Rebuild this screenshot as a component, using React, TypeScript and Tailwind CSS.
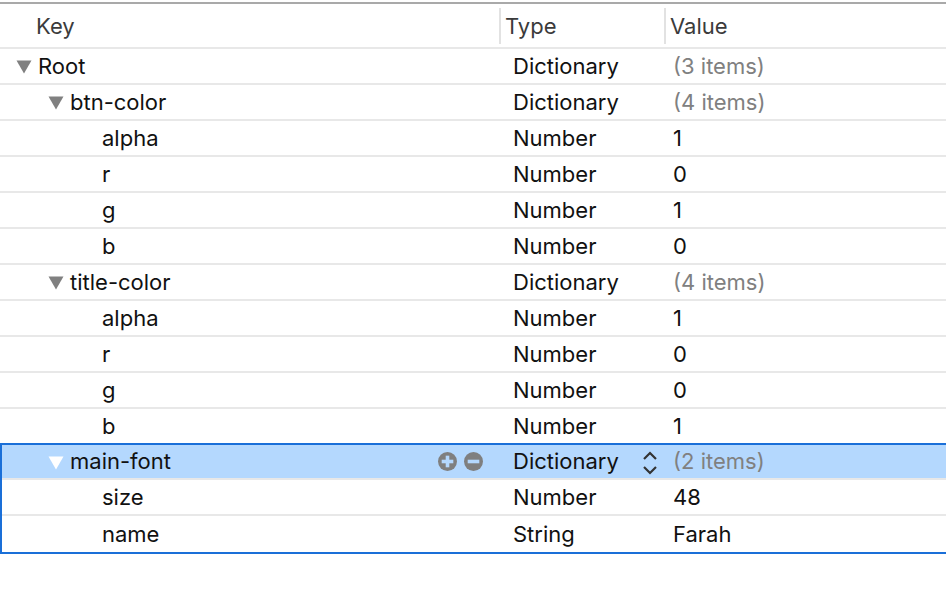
import React from "react";

type Row = {
  key: string;
  type: string;
  value: string;
  level: number;
  open?: boolean;
  muted?: boolean;
};

const rows: Row[] = [
  { key: "Root", type: "Dictionary", value: "(3 items)", level: 0, open: true, muted: true },
  { key: "btn-color", type: "Dictionary", value: "(4 items)", level: 1, open: true, muted: true },
  { key: "alpha", type: "Number", value: "1", level: 2 },
  { key: "r", type: "Number", value: "0", level: 2 },
  { key: "g", type: "Number", value: "1", level: 2 },
  { key: "b", type: "Number", value: "0", level: 2 },
  { key: "title-color", type: "Dictionary", value: "(4 items)", level: 1, open: true, muted: true },
  { key: "alpha", type: "Number", value: "1", level: 2 },
  { key: "r", type: "Number", value: "0", level: 2 },
  { key: "g", type: "Number", value: "0", level: 2 },
  { key: "b", type: "Number", value: "1", level: 2 },
];

const selected: Row[] = [
  { key: "main-font", type: "Dictionary", value: "(2 items)", level: 1, open: true, muted: true },
  { key: "size", type: "Number", value: "48", level: 2 },
  { key: "name", type: "String", value: "Farah", level: 2 },
];

// padding-left of the key cell, per level (outside / inside the selection box)
const indent = ["pl-[16px]", "pl-[48px]", "pl-[102px]"];
const boxIndent = ["pl-[14px]", "pl-[46px]", "pl-[100px]"];

function Triangle({ white }: { white?: boolean }) {
  return (
    <svg width="16" height="14" viewBox="0 0 16 14" className="mr-[6px] mt-[2px] shrink-0">
      <polygon points="0.5,0.5 15.5,0.5 8,13.5" fill={white ? "#ffffff" : "#808080"} />
    </svg>
  );
}

function PlusMinus() {
  return (
    <div className="ml-auto mr-[16px] flex items-center gap-[7px]">
      <svg width="19" height="19" viewBox="0 0 18 18">
        <circle cx="9" cy="9" r="9" fill="#7f7f7f" />
        <rect x="3.5" y="7.3" width="11" height="3.4" fill="#b4d8fe" />
        <rect x="7.3" y="3.5" width="3.4" height="11" fill="#b4d8fe" />
      </svg>
      <svg width="19" height="19" viewBox="0 0 18 18">
        <circle cx="9" cy="9" r="9" fill="#7f7f7f" />
        <rect x="3.5" y="7.3" width="11" height="3.4" fill="#b4d8fe" />
      </svg>
    </div>
  );
}

function Chevrons() {
  return (
    <svg width="16" height="28" viewBox="0 0 16 28" className="ml-auto mr-[6px] mt-[2px]">
      <polyline points="2,10 8,4 14,10" fill="none" stroke="#333" strokeWidth="2.2" />
      <polyline points="2,18 8,24 14,18" fill="none" stroke="#333" strokeWidth="2.2" />
    </svg>
  );
}

function TableRow({
  row,
  active,
  last,
  inBox,
}: {
  row: Row;
  active?: boolean;
  last?: boolean;
  inBox?: boolean;
}) {
  const hasKids = row.open !== undefined;
  const pad = inBox ? boxIndent[row.level] : indent[row.level];
  return (
    <div
      className={`flex items-center ${active ? "h-[35px] bg-[#b4d8fe]" : "h-[36px]"} ${
        last ? "" : "border-b-2 border-[#e8e8e8]"
      }`}
    >
      <div className={`flex h-full items-center ${inBox ? "w-[497px]" : "w-[499px]"} ${pad}`}>
        {hasKids && <Triangle white={active} />}
        <span>{row.key}</span>
        {active && <PlusMinus />}
      </div>
      <div className="flex h-full w-[165px] items-center pl-[14px]">
        <span>{row.type}</span>
        {active && <Chevrons />}
      </div>
      <div className={`flex-1 pl-[9px] ${row.muted ? "text-[#808080]" : ""}`}>{row.value}</div>
    </div>
  );
}

export default function App() {
  return (
    <div
      className="h-[608px] w-[946px] overflow-hidden bg-white text-[22px] text-[#111111]"
      style={{ fontFamily: "Inter, 'Liberation Sans', sans-serif" }}
    >
      <div className="mt-[2px] h-[2px] bg-[#a9a9a9]" />
      <div className="flex h-[45px] items-center border-b-2 border-[#e8e8e8] text-[#3b3b3b]">
        <div className="w-[499px] pl-[36px] pt-[2px]">Key</div>
        <div className="flex h-[36px] w-[165px] items-center border-l-2 border-[#e2e2e2] pl-[4px] pt-[2px]">
          Type
        </div>
        <div className="flex h-[36px] flex-1 items-center border-l-2 border-[#e2e2e2] pl-[4px] pt-[2px]">
          Value
        </div>
      </div>
      {rows.map((r, i) => (
        <TableRow key={i} row={r} />
      ))}
      <div className="-mt-[2px] w-[960px] border-2 border-[#1a6fd8]">
        {selected.map((r, i) => (
          <TableRow key={i} row={r} active={i === 0} last={i === selected.length - 1} inBox />
        ))}
      </div>
    </div>
  );
}
